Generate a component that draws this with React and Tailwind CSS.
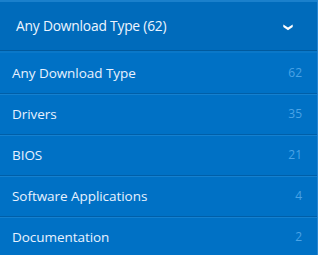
import React from "react";

const rows = [
  ["Any Download Type", "62"],
  ["Drivers", "35"],
  ["BIOS", "21"],
  ["Software Applications", "4"],
  ["Documentation", "2"],
];

export default function App() {
  return (
    <div
      className="w-[318px] h-[255px] overflow-hidden bg-[#0071c5] border-r border-[#2a86d0]"
      style={{ fontFamily: '"Open Sans", "Noto Sans", Arial, sans-serif' }}
    >
      <div className="h-[51px] bg-[#006bbb] border-t-2 border-[#1a80cc] flex items-center justify-between pl-[16px] pr-[24px] border-b border-b-[#005a9e]">
        <span className="text-[13.8px] text-[#eef5ff] tracking-[-0.2px]">Any Download Type (62)</span>
        <svg width="10" height="7" viewBox="0 0 10 7" className="mt-[2px]">
          <path d="M0.3 0.6 L5 3.6 L9.7 0.6 L9.7 3 L5 6.2 L0.3 3 Z" fill="#ffffff" />
        </svg>
      </div>
      <div className="h-[2px] bg-[#0a78c9]" />
      {rows.map(([label, n]) => (
        <div
          key={label}
          className="h-[41px] flex items-center justify-between pl-[12px] pr-[15px] border-b border-b-[#005fa8] shadow-[0_1px_0_#1580cf]"
        >
          <span className="text-[13.5px] text-[#e8f1ff] tracking-[-0.05px]">{label}</span>
          <span className="text-[12px] text-[#4aa3e6]">{n}</span>
        </div>
      ))}
    </div>
  );
}
